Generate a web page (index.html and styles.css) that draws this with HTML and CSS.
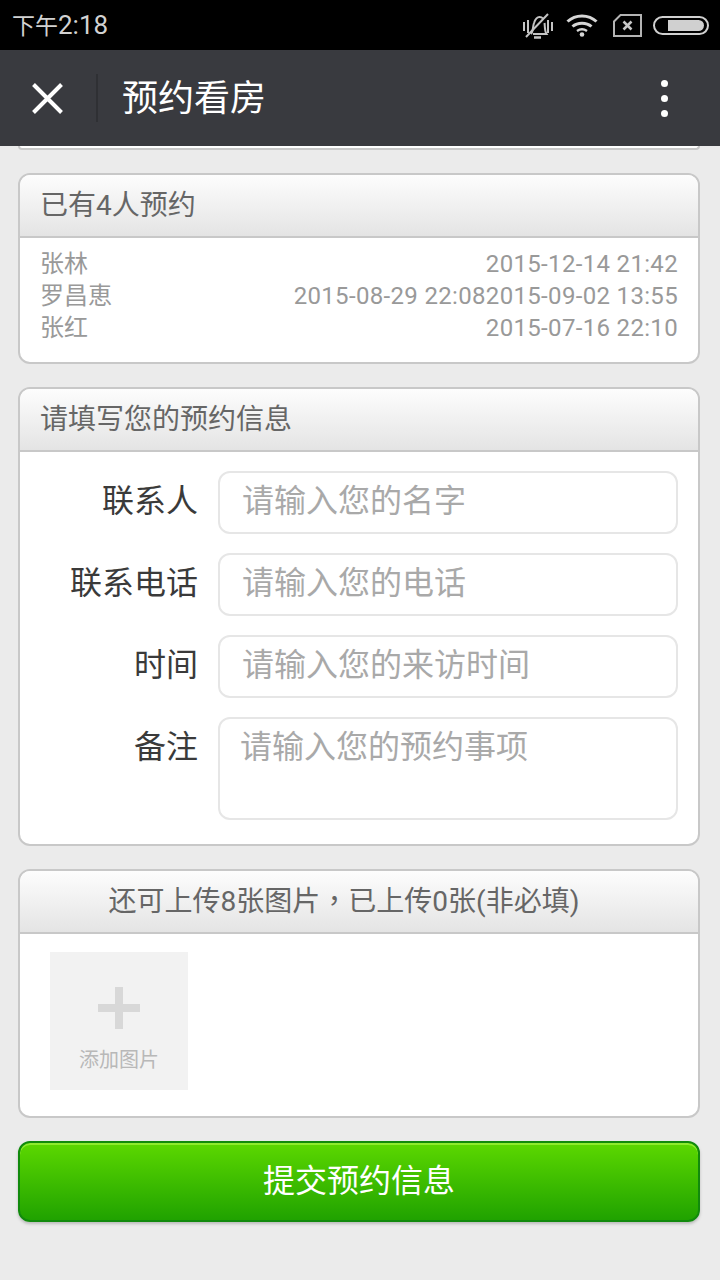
FILE: index.html
```html
<!doctype html>
<html>

<head>
	<meta http-equiv="Content-Type" content="text/html; charset=utf-8" />
	<title>预约看房</title>
	<link rel="stylesheet" href="styles.css">
</head>

<body>
	<div class="status">
		<span class="time"><span class="time-cn">下午</span>2:18</span>
		<div class="status-icons">
			<svg class="mute" width="30" height="27" viewBox="0 0 30 27" fill="none" stroke="#c4c4c4" stroke-width="2">
				<path d="M8 22c2.500-2.500 1.500-7 3-11 1-3 2.500-6 5.500-6 1.500 0 2.700.6 3.600 1.600M21.500 11c.6 4 0 8 2 11H10" />
				<path d="M11 25.500h7" stroke-width="2.500" />
				<path d="M3 25L25 2" />
				<path d="M1 10v9M5 8v13M25 8v13M29 10v9" />
			</svg>
			<svg width="32" height="24" viewBox="0 0 32 24" fill="none" stroke="#d6d6d6" stroke-width="3">
				<path d="M1.500 8.500C9.500 1 22.500 1 30.500 8.500" />
				<path d="M6.500 13.500c5-4.500 14-4.500 19 0" />
				<path d="M11 18c3-2 7-2 10 0" stroke-width="2.500" />
				<circle cx="16" cy="21.500" r="2.300" fill="#d6d6d6" stroke="none" />
			</svg>
			<svg class="sim" width="29" height="23" viewBox="0 0 29 23" fill="none" stroke="#b4b4b4" stroke-width="2">
				<path d="M1 7.500L7.500 1H28v21H1z" />
				<path d="M10.500 7.500l8 8M18.500 7.500l-8 8" stroke="#c8c8c8" stroke-width="2.500" />
			</svg>
			<div class="battery"><div class="battery-fill"></div></div>
		</div>
	</div>

	<div class="nav">
		<div class="nav-close">
			<svg width="31" height="31" viewBox="0 0 31 31" stroke="#fff" stroke-width="4">
				<path d="M1.500 1.500L29.500 29.500M29.500 1.500L1.500 29.500" />
			</svg>
		</div>
		<div class="nav-title">预约看房</div>
		<div class="nav-more">
			<span></span>
			<span></span>
			<span></span>
		</div>
	</div>

	<div class="content">
		<div class="card card-cut"></div>

		<div class="card">
			<div class="card-head">已有4人预约</div>
			<div class="list">
				<div class="list-row"><span>张林</span><span class="date">2015-12-14 21:42</span></div>
				<div class="list-row"><span>罗昌恵</span><span class="date">2015-08-29 22:082015-09-02 13:55</span></div>
				<div class="list-row"><span>张红</span><span class="date">2015-07-16 22:10</span></div>
			</div>
		</div>

		<div class="card">
			<div class="card-head">请填写您的预约信息</div>
			<div class="form">
				<div class="form-row">
					<div class="form-label">联系人</div>
					<div class="input">请输入您的名字</div>
				</div>
				<div class="form-row">
					<div class="form-label">联系电话</div>
					<div class="input">请输入您的电话</div>
				</div>
				<div class="form-row">
					<div class="form-label">时间</div>
					<div class="input">请输入您的来访时间</div>
				</div>
				<div class="form-row">
					<div class="form-label">备注</div>
					<div class="input input-area">请输入您的预约事项</div>
				</div>
			</div>
		</div>

		<div class="card">
			<div class="card-head card-head-center">还可上传8张图片<span class="comma">，</span>已上传0张(非必填)</div>
			<div class="upload">
				<div class="add-pic">
					<div class="plus"></div>
					<div class="add-text">添加图片</div>
				</div>
			</div>
		</div>

		<div class="submit">提交预约信息</div>
	</div>
</body>

</html>
```

FILE: styles.css
```css
html,
body {
	margin: 0;
	padding: 0;
}

body {
	width: 720px;
	height: 1280px;
	overflow: hidden;
	background: #ebebeb;
	font-family: "Roboto", "Noto Sans CJK SC", sans-serif;
}

.status {
	height: 50px;
	background: #000;
	display: flex;
	align-items: center;
	justify-content: space-between;
	padding: 0 11px 0 12px;
	box-sizing: border-box;
}

.time {
	font-size: 26px;
	line-height: 50px;
	height: 50px;
	color: #d2d2d2;
}

.time-cn {
	font-size: 23px;
}

.status-icons {
	display: flex;
	align-items: center;
	gap: 15px;
}

.mute {
	margin-right: -2px;
}

.sim {
	margin-right: -4px;
}

.battery {
	width: 44px;
	height: 11px;
	border: 2px solid #d0d0d0;
	border-radius: 10px;
	padding: 2px 3px 2px 5px;
	display: flex;
	justify-content: flex-end;
}

.battery-fill {
	width: 36px;
	background: #d0d0d0;
	border-radius: 0 6px 6px 0;
}

.nav {
	height: 96px;
	background: #393a3f;
	display: flex;
	align-items: center;
}

.nav-close {
	width: 98px;
	height: 48px;
	margin-right: 24px;
	padding-right: 2px;
	box-sizing: border-box;
	border-right: 2px solid #2f3034;
	display: flex;
	align-items: center;
	justify-content: center;
}

.nav-title {
	flex: 1;
	font-size: 36px;
	line-height: 98px;
	height: 96px;
	color: #fff;
}

.nav-more {
	width: 112px;
	display: flex;
	flex-direction: column;
	align-items: center;
	gap: 8px;
}

.nav-more span {
	width: 7px;
	height: 7px;
	background: #fff;
	border-radius: 50%;
}

.content {
	padding: 0 20px 0 18px;
	display: flex;
	flex-direction: column;
	gap: 23px;
}

.card {
	width: 682px;
	box-sizing: border-box;
	background: #fff;
	border: 2px solid #c8c8c8;
	border-radius: 12px;
	overflow: hidden;
}

.card-cut {
	height: 4px;
	border-top: 0;
	border-radius: 0 0 12px 12px;
}

.card-head {
	height: 63px;
	line-height: 62px;
	box-sizing: border-box;
	padding-left: 20px;
	font-size: 28px;
	color: #666;
	background: linear-gradient(#fdfdfd, #e4e4e4);
	border-bottom: 2px solid #c8c8c8;
}

.card-head-center {
	padding-left: 0;
	padding-right: 30px;
	text-align: center;
}

.comma {
	font-family: "Noto Sans CJK TC", sans-serif;
	line-height: 0;
}

.list {
	padding: 10px 20px 18px 20px;
}

.list-row {
	display: flex;
	justify-content: space-between;
	height: 32px;
	line-height: 32px;
	font-size: 24px;
	color: #999;
}

.date {
	letter-spacing: .33px;
}

.form {
	padding: 19px 20px 24px 0;
	display: flex;
	flex-direction: column;
	gap: 19px;
}

.form-row {
	display: flex;
	gap: 20px;
}

.form-label {
	width: 178px;
	height: 62px;
	line-height: 60px;
	text-align: right;
	font-size: 32px;
	color: #3a3a3a;
}

.input {
	flex: 1;
	height: 63px;
	line-height: 56px;
	box-sizing: border-box;
	padding-left: 22px;
	background: #fff;
	border: 2px solid #e6e6e6;
	border-radius: 12px;
	font-size: 32px;
	color: #a9a9a9;
}

.input-area {
	height: 103px;
	padding-left: 20px;
}

.upload {
	height: 182px;
	padding: 18px 30px 0;
	box-sizing: border-box;
}

.add-pic {
	width: 138px;
	height: 138px;
	background: #f2f2f2;
	display: flex;
	flex-direction: column;
	align-items: center;
}

.plus {
	width: 42px;
	height: 42px;
	margin-top: 35px;
	background:
		linear-gradient(#d8d8d8, #d8d8d8) center / 42px 8px no-repeat,
		linear-gradient(#d8d8d8, #d8d8d8) center / 8px 42px no-repeat;
}

.add-text {
	margin-top: 16px;
	font-size: 20px;
	line-height: 30px;
	color: #b8b8b8;
}

.submit {
	height: 81px;
	line-height: 77px;
	box-sizing: border-box;
	text-align: center;
	font-size: 32px;
	color: #fff;
	border: 2px solid #118a0c;
	border-radius: 12px;
	background: linear-gradient(#5cd800, #20a200);
	box-shadow: inset 0 2px 0 #8eea2e, 0 2px 3px #bbb;
}
```
